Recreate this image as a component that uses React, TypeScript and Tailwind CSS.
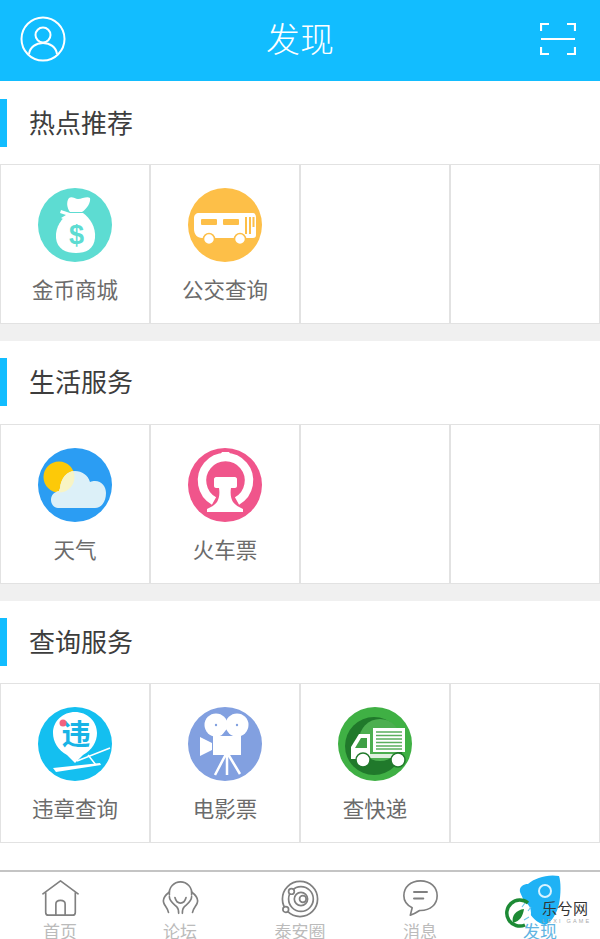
const font = "font-['Noto_Sans_CJK_SC','Noto_Sans',sans-serif]";

function MoneyIcon() {
  return (
    <svg viewBox="0 0 74 74" className="w-[74px] h-[74px]">
      <circle cx="37" cy="37" r="37" fill="#5ddcd2" />
      <path d="M32 24c-3-4-4-10-1-14 3-2 6 1 9 1 4 0 9-3 12-1 1 4-3 11-8 14z" fill="#fff" />
      <path d="M32 25l-9-3-1 3 6 2-5 3 2 1 8-4z" fill="#fff" />
      <path d="M31 25h14c7 5 13 14 12 25-1 11-9 15-19 15s-19-4-20-15c-1-11 6-20 13-25z" fill="#fff" />
      <text x="38.500" y="56" textAnchor="middle" fontSize="27" fontWeight="700" fill="#5ddcd2" fontFamily="Liberation Sans">$</text>
    </svg>
  );
}

function BusIcon() {
  return (
    <svg viewBox="0 0 74 74" className="w-[74px] h-[74px]">
      <circle cx="37" cy="37" r="37" fill="#fdbf48" />
      <path d="M11 25h54c2 0 3 2 3 5v17c0 2-1 3-3 3H14c-5 0-8-4-8-9v-11c0-3 2-5 5-5z" fill="#fff" />
      <rect x="13" y="31" width="16" height="6" rx="1" fill="#fdbf48" />
      <rect x="35" y="31" width="16" height="6" rx="1" fill="#fdbf48" />
      <path d="M58 29v17M62 29v17M65.500 29v10" stroke="#fdbf48" strokeWidth="2" />
      <circle cx="21" cy="51" r="5.500" fill="#fff" stroke="#fdbf48" strokeWidth="1.500" />
      <circle cx="52" cy="51" r="5.500" fill="#fff" stroke="#fdbf48" strokeWidth="1.500" />
    </svg>
  );
}

const cloudPath =
  "M20 60c-4 0-7-4-7-8 0-5 3-8 8-9 0-1 1-2 1-3 1-10 7-17 15-17 7 0 13 4 15 11 2-1 3-1 5-1 7 0 11 6 11 12 0 9-5 15-11 15z";

function WeatherIcon() {
  return (
    <svg viewBox="0 0 74 74" className="w-[74px] h-[74px]">
      <defs>
        <clipPath id="cloud-clip">
          <path d="M20 60c-4 0-7-4-7-8 0-5 3-8 8-9 0-1 1-2 1-3 1-10 7-17 15-17 7 0 13 4 15 11 2-1 3-1 5-1 7 0 11 6 11 12 0 9-5 15-11 15z" />
        </clipPath>
      </defs>
      <circle cx="37" cy="37" r="37" fill="#2b9df3" />
      <circle cx="21" cy="29" r="15.500" fill="#fdc908" />
      <path d={cloudPath} fill="#dcf0f8" />
      <circle cx="21" cy="29" r="15.500" fill="#f8f4c4" clipPath="url(#cloud-clip)" />
    </svg>
  );
}

function TrainIcon() {
  return (
    <svg viewBox="0 0 74 74" className="w-[74px] h-[74px]">
      <circle cx="37" cy="37" r="37" fill="#f0558b" />
      <path d="M26 53a23.500 23.500 0 1 1 23 0" fill="none" stroke="#fff" strokeWidth="8.500" />
      <path d="M32 7l2-3h7l2 3z" fill="#fff" />
      <path d="M28 29h19c1 0 2 1 2 2v7c0 1-1 2-2 2h-4c-1 6 0 11 2 14 2 3 6 5 10 7v3H19v-3c4-2 8-4 10-7 2-3 3-8 2-14h-3c-1 0-2-1-2-2v-7c0-1 1-2 2-2z" fill="#fff" />
    </svg>
  );
}

function ViolationIcon() {
  return (
    <svg viewBox="0 0 74 74" className="w-[74px] h-[74px]">
      <circle cx="37" cy="37" r="37" fill="#14bff0" />
      <path d="M15 61l47-5 1 2-45 7z" fill="#fff" />
      <path d="M39 54l33-13M50 48l8 10" stroke="#fff" strokeWidth="1.500" />
      <path d="M37 56l-8-8C20 43 15 35 15 26 15 14 25 5 37 5s22 9 22 21c0 9-5 17-14 22z" fill="#fff" />
      <text x="38" y="38" textAnchor="middle" fontSize="29" fontWeight="700" fill="#18b4e6" fontFamily="Noto Sans CJK SC">违</text>
      <circle cx="25" cy="16" r="3.500" fill="#f2617e" />
    </svg>
  );
}

function CameraIcon() {
  return (
    <svg viewBox="0 0 74 74" className="w-[74px] h-[74px]">
      <circle cx="37" cy="37" r="37" fill="#82a0e0" />
      <circle cx="28" cy="18" r="11.500" fill="#fff" />
      <circle cx="49" cy="18" r="11.500" fill="#fff" />
      <circle cx="28" cy="18" r="1.200" fill="#82a0e0" />
      <circle cx="49" cy="18" r="1.200" fill="#82a0e0" />
      <path d="M38 23l4 5h-8z" fill="#82a0e0" />
      <path d="M25 29h28v19H25zM12 30l12 6v7l-12 6z" fill="#fff" />
      <path d="M38 47L27 68M39 47v21M40 47l12 20" stroke="#fff" strokeWidth="2.500" />
    </svg>
  );
}

function TruckIcon() {
  return (
    <svg viewBox="0 0 74 74" className="w-[74px] h-[74px]">
      <circle cx="37" cy="37" r="37" fill="#3fb044" />
      <circle cx="36" cy="39" r="29" fill="#20792b" />
      <circle cx="42" cy="33" r="21" fill="#4caf50" />
      <rect x="35" y="21" width="32" height="24" fill="#fff" />
      <path d="M38 25h26M38 28.500h26M38 32h26M38 35.500h26M38 39h26M38 42h26" stroke="#5aaf5e" strokeWidth="1.500" />
      <path d="M21 27h11v25H13V40z" fill="#fff" />
      <path d="M23 31h6v10H17z" fill="#3fa046" />
      <path d="M32 47h31v4H32z" fill="#dff0df" />
      <circle cx="25" cy="53" r="7" fill="#fff" stroke="#20792b" strokeWidth="1.500" />
      <circle cx="60" cy="53" r="7" fill="#fff" stroke="#20792b" strokeWidth="1.500" />
    </svg>
  );
}

function Cell({ label, icon }: { label?: string; icon?: React.ReactNode }) {
  return (
    <div className="h-[160px] border border-[#e2e2e2] flex flex-col items-center pt-[23px]">
      {icon}
      {label && <span className="mt-[12px] text-[21.500px] leading-[30px] text-[#6b6b6b]">{label}</span>}
    </div>
  );
}

const sections = [
  {
    title: "热点推荐",
    items: [
      { label: "金币商城", icon: <MoneyIcon /> },
      { label: "公交查询", icon: <BusIcon /> },
    ],
  },
  {
    title: "生活服务",
    items: [
      { label: "天气", icon: <WeatherIcon /> },
      { label: "火车票", icon: <TrainIcon /> },
    ],
  },
  {
    title: "查询服务",
    items: [
      { label: "违章查询", icon: <ViolationIcon /> },
      { label: "电影票", icon: <CameraIcon /> },
      { label: "查快递", icon: <TruckIcon /> },
    ],
  },
];

function Section({ title, items, last }: { title: string; items: { label: string; icon: React.ReactNode }[]; last: boolean }) {
  const blanks = Array.from({ length: 4 - items.length });
  return (
    <section className={last ? "" : "border-b-[17px] border-[#f0f0f0]"}>
      <div className="h-[82.500px] flex items-center">
        <div className="w-[7px] h-[48px] bg-[#12bdff]" />
        <h2 className="ml-[22px] -mt-[2px] text-[26px] leading-none text-[#3d3d3d] font-normal">{title}</h2>
      </div>
      <div className="grid grid-cols-4">
        {items.map((it) => (
          <Cell key={it.label} label={it.label} icon={it.icon} />
        ))}
        {blanks.map((_, i) => (
          <Cell key={i} />
        ))}
      </div>
    </section>
  );
}

function HomeTab() {
  return (
    <svg viewBox="0 0 40 40" className="w-[37px] h-[37px]" fill="none" stroke="#808080" strokeWidth="1.800" strokeLinejoin="round" strokeLinecap="round">
      <path d="M1 15L20 1l19 14" />
      <path d="M4 14v21c0 2 1 3 3 3h26c2 0 3-1 3-3V14" />
      <path d="M15 38V26c0-3 2-4 5-4s5 1 5 4v12" />
    </svg>
  );
}

function ForumTab() {
  return (
    <svg viewBox="0 0 40 40" className="w-[37px] h-[37px]" fill="none" stroke="#808080" strokeWidth="1.800" strokeLinecap="round">
      <path d="M8 16C7 8 13 2 20 2s13 6 12 14" />
      <path d="M14 19c1 4 3 6 6 6s5-2 6-6" />
      <path d="M8 13c-4 3-8 7-6 12 1 3 4 5 5 10M32 13c4 3 8 7 6 12-1 3-4 5-5 10" />
      <path d="M8 18c0 5 5 8 8 11 2 2 2 4 2 7M32 18c0 5-5 8-8 11-2 2-2 4-2 7" />
    </svg>
  );
}

function CircleTab() {
  return (
    <svg viewBox="0 0 40 40" className="w-[38px] h-[38px]" fill="none" stroke="#808080" strokeWidth="1.800">
      <circle cx="20" cy="20" r="18.500" />
      <circle cx="21" cy="20" r="13" />
      <circle cx="21" cy="20" r="7" />
      <circle cx="23" cy="20" r="3.500" />
      <circle cx="11" cy="12" r="3" fill="#fff" />
      <circle cx="5" cy="31" r="3" fill="#fff" />
    </svg>
  );
}

function MessageTab() {
  return (
    <svg viewBox="0 0 40 40" className="w-[37px] h-[37px]" fill="none" stroke="#808080" strokeWidth="1.800" strokeLinecap="round" strokeLinejoin="round">
      <path d="M20 1C9 1 2 8 2 17c0 6 3 10 9 13l-2 8c4-1 7-3 10-5h1c11 0 18-7 18-16S31 1 20 1z" />
      <path d="M13 13h14M13 20h10" strokeWidth="2.200" />
    </svg>
  );
}

function FindTab() {
  return (
    <svg viewBox="0 0 42 54" className="w-[42px] h-[54px] -mt-[5px] max-w-none">
      <path d="M1 17c-1-5 3-8 8-8C16 3 28-1 40 1c2 6 2 18 0 28-2 9-7 18-14 21-8-2-14-8-18-16C6 27 3 22 1 17z" fill="#1fb2f5" />
      <circle cx="26" cy="16" r="6" fill="none" stroke="#d8f3ff" strokeWidth="2" />
    </svg>
  );
}

const tabs = [
  { label: "首页", icon: <HomeTab /> },
  { label: "论坛", icon: <ForumTab /> },
  { label: "泰安圈", icon: <CircleTab /> },
  { label: "消息", icon: <MessageTab /> },
  { label: "发现", icon: <FindTab />, active: true },
];

function Watermark() {
  return (
    <div className="absolute left-[504px] top-[898px] flex items-start">
      <svg viewBox="0 0 29 30" className="w-[29px] h-[30px]">
        <circle cx="14" cy="15" r="13" fill="#fff" />
        <path d="M24 5A13 13 0 1 0 21 27" fill="none" stroke="#1d8a35" strokeWidth="3.500" />
        <path d="M9 25c-2-7 3-13 11-14-1 7-4 12-11 14z" fill="#1d8a35" />
        <path d="M18 9l3-4M24 13l3-4M20 22l5-3" stroke="#6fc6ea" strokeWidth="1.200" />
      </svg>
      <div className="ml-[9px] flex flex-col">
        <span className="text-[15px] leading-[19px] tracking-[0.500px] text-[#333]">乐兮网</span>
        <span className="font-['Liberation_Sans'] text-[5.500px] leading-[8px] tracking-[2.200px] text-[#aaa] whitespace-nowrap">LEXI GAME</span>
      </div>
    </div>
  );
}

export default function App() {
  return (
    <div className={`${font} relative w-[600px] h-[939px] overflow-hidden bg-white flex flex-col`}>
      <header className="h-[81px] shrink-0 bg-[#12bdff] flex items-center pl-[24px] pr-[24px] pb-[3px]">
        <div className="flex-1">
          <svg viewBox="0 0 46 46" className="w-[46px] h-[46px] -ml-[4px]" fill="none" stroke="#fff" strokeWidth="2">
            <circle cx="23" cy="23" r="21.500" />
            <circle cx="23" cy="19" r="7.500" />
            <path d="M9 38c1-7 7-11 14-11s13 4 14 11" />
          </svg>
        </div>
        <h1 className="text-[34px] leading-none text-white font-light -mt-[2px]">发现</h1>
        <div className="flex-1 flex justify-end">
          <svg viewBox="0 0 36 34" className="w-[36px] h-[34px]" fill="none" stroke="#fff" strokeWidth="2.200">
            <path d="M1 9V2h8M27 2h8v7M1 25v7h8M27 32h8v-7" />
            <path d="M1 17h34" />
          </svg>
        </div>
      </header>

      <main className="flex-1 pt-[0.500px]">
        {sections.map((s, i) => (
          <Section key={s.title} title={s.title} items={s.items} last={i === sections.length - 1} />
        ))}
      </main>

      <nav className="h-[69px] shrink-0 border-t-2 border-[#c4c4c4] flex bg-white">
        {tabs.map((t) => (
          <div key={t.label} className="relative flex-1 flex flex-col items-center pt-[8px]">
            <div className="h-[40px] flex items-start justify-center">{t.icon}</div>
            <span className={`absolute top-[47px] text-[17px] leading-[24px] ${t.active ? "text-[#62b4e2]" : "text-[#bbbbbb]"}`}>{t.label}</span>
          </div>
        ))}
      </nav>

      <Watermark />
    </div>
  );
}
